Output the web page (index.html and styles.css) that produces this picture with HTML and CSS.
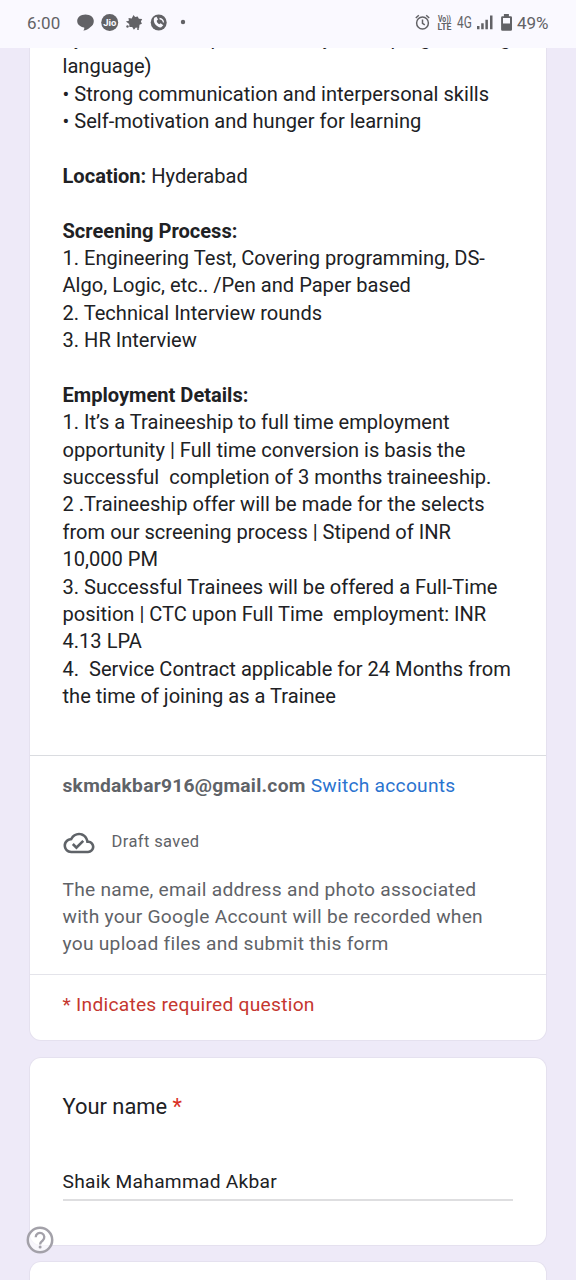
FILE: index.html
```html
<!DOCTYPE html>
<html lang="en">
<head>
<meta charset="utf-8">
<title>Form</title>
<link rel="stylesheet" href="styles.css">
</head>
<body>
<header class="status">
  <span class="clock">6:00</span>
  <svg class="notif" width="112" height="20" viewBox="0 0 112 20" fill="#626266">
    <path d="M8.500 1.500C3.800 1.500.2 4.300.2 8c0 3.500 3 6 7 6.400.3 1.300-.2 2.400-1 3.200 3-.3 5.300-1.400 7-3.400 2.300-1.200 3.600-3.500 3.600-6.200 0-3.700-3.600-6.500-8.300-6.500z"/>
    <circle cx="32.700" cy="9.500" r="8.500"/>
    <text x="32.800" y="13" class="jio" text-anchor="middle">Jio</text>
    <path d="M56.500 2l1.600 2 2.600-.6 1.200 2.400 3.300.3-1.300 2.500 1 2.200-2.400 1-.4 3.500-3.200-.8-2 2.200-1.700-2.800-2.800.2-.2-3-3.300-2.500 3-.9-.4-2.600 3.200.3z"/>
    <circle cx="50.500" cy="13.500" r="1.200"/><circle cx="61" cy="16" r="1"/>
    <circle cx="81.700" cy="9.500" r="8"/>
    <path d="M77.300 4.700c-1.800 4 1.500 9.300 6.700 9.800l2.300-2.200-2.600-2-1.500 1c-1.500-.7-2.400-2-2.500-3.500l1.300-1.200-1.500-2.800z" fill="#faf9ff"/>
    <path d="M82.500 5.500q3.500.5 4 4" fill="none" stroke="#faf9ff" stroke-width="1.300"/>
    <circle cx="106" cy="9" r="2.200"/>
  </svg>
  <span class="spacer"></span>
  <svg class="system" width="98" height="22" viewBox="0 0 98 22" fill="#626266">
    <g fill="none" stroke="#626266" stroke-width="1.500">
      <circle cx="8.500" cy="11" r="5.900"/>
      <path d="M8.500 7.500v3.800l2.300 1.500M1.800 6l3-2.700M15.200 6l-3-2.700"/>
    </g>
    <text x="24" y="9.500" class="volte" textLength="13" lengthAdjust="spacingAndGlyphs">Vo))</text>
    <text x="23.500" y="17.500" class="volte" textLength="14" lengthAdjust="spacingAndGlyphs">LTE</text>
    <text x="43" y="16" class="net" textLength="14.800" lengthAdjust="spacingAndGlyphs">4G</text>
    <path d="M63 14h2.500v3.200H63zM67.200 11.300h2.500v5.900h-2.500zM71.400 7.700h2.500v9.500h-2.500zM76 3.500h2.500v13.700H76z"/>
    <path fill-rule="evenodd" d="M89.900 2h5v2.200h1.800q1.300 0 1.300 1.300v12q0 1.300-1.300 1.300h-8.300q-1.300 0-1.300-1.300v-12q0-1.300 1.300-1.300h1.500zM89 6v5.500h7V6z"/>
  </svg>
  <span class="battery">49%</span>
</header>

<main class="page">
  <section class="card intro">
    <div class="description">
      <div class="clipped"><span class="w1">by use of</span><span class="w2">prior</span><span class="w3">any</span><span>programming</span></div>
      <div>language)</div>
      <div>• Strong communication and interpersonal skills</div>
      <div>• Self-motivation and hunger for learning</div>
      <br>
      <div><b>Location:</b> Hyderabad</div>
      <br>
      <div><b>Screening Process:</b></div>
      <div>1. Engineering Test, Covering programming, DS-</div>
      <div>Algo, Logic, etc.. /Pen and Paper based</div>
      <div>2. Technical Interview rounds</div>
      <div>3. HR Interview</div>
      <br>
      <div><b>Employment Details:</b></div>
      <div>1. It’s a Traineeship to full time employment</div>
      <div>opportunity | Full time conversion is basis the</div>
      <div>successful&nbsp; completion of 3 months traineeship.</div>
      <div>2 .Traineeship offer will be made for the selects</div>
      <div>from our screening process | Stipend of INR</div>
      <div>10,000 PM</div>
      <div>3. Successful Trainees will be offered a Full-Time</div>
      <div>position | CTC upon Full Time&nbsp; employment: INR</div>
      <div>4.13 LPA</div>
      <div>4.&nbsp; Service Contract applicable for 24 Months from</div>
      <div>the time of joining as a Trainee</div>
    </div>
    <div class="account">
      <div class="who"><b>skmdakbar916@gmail.com</b> <a class="switch">Switch accounts</a></div>
      <div class="draft">
        <svg width="32" height="32" viewBox="-.4 -.4 24.800 24.800" fill="#5f6368"><path d="M19.350 10.040C18.670 6.590 15.640 4 12 4 9.110 4 6.600 5.640 5.350 8.040 2.340 8.360 0 10.910 0 14c0 3.310 2.690 6 6 6h13c2.760 0 5-2.240 5-5 0-2.640-2.050-4.780-4.650-4.960zM19 18H6c-2.210 0-4-1.790-4-4 0-2.050 1.530-3.760 3.560-3.970l1.070-.11.5-.95C8.080 7.140 9.940 6 12 6c2.620 0 4.880 1.860 5.390 4.430l.3 1.500 1.530.11c1.560.1 2.780 1.410 2.780 2.960 0 1.650-1.350 3-3 3zm-9-3.820l-2.090-2.090L6.500 13.500 10 17l6.010-6.010-1.410-1.410z"/></svg>
        <span>Draft saved</span>
      </div>
      <p class="notice">The name, email address and photo associated<br>with your Google Account will be recorded when<br>you upload files and submit this form</p>
    </div>
    <div class="required">* Indicates required question</div>
  </section>

  <section class="card question">
    <div class="label">Your name <span class="star">*</span></div>
    <div class="answer">Shaik Mahammad Akbar</div>
  </section>

  <section class="card next"></section>
</main>

<svg class="help" width="28" height="28" viewBox="0 0 28 28">
  <circle cx="14" cy="14" r="12.200" fill="#fff" fill-opacity=".6" stroke="#a3a1a9" stroke-width="2.500"/>
  <path d="M9.700 11.200a4.300 4.300 0 1 1 7 3.300c-1.700 1.300-2.600 2-2.600 4" fill="none" stroke="#a3a1a9" stroke-width="2.300"/>
  <circle cx="14.100" cy="21" r="1.500" fill="#a3a1a9"/>
</svg>
</body>
</html>
```
FILE: styles.css
```css
* { box-sizing: border-box; }
body {
  margin: 0;
  width: 576px;
  height: 1280px;
  overflow: hidden;
  display: flex;
  flex-direction: column;
  background: #eeeaf8;
  color: #202124;
  font-family: Roboto, "Liberation Sans", sans-serif;
  white-space: nowrap;
}
.status {
  flex: none;
  height: 48px;
  padding: 0 27px 3px 27px;
  display: flex;
  align-items: center;
  background: #faf9ff;
  color: #626266;
}
.clock { width: 50px; font-size: 17px; letter-spacing: 0.2px; }
.spacer { flex: 1; }
.battery { width: 32px; margin-left: 5px; font-size: 17px; }
.jio { fill: #faf9ff; font-size: 9.5px; font-weight: 700; }
.volte { font-size: 9px; font-weight: 700; }
.net { font-size: 16px; }
.page {
  flex: 1;
  min-height: 0;
  overflow: hidden;
  padding: 0 30px;
  display: flex;
  flex-direction: column;
  gap: 18px;
}
.card {
  flex: none;
  background: #fff;
  border-radius: 11px;
  box-shadow: 0 0 0 1px #e5e1ef;
}
.intro { height: 992px; border-radius: 0 0 11px 11px; }
.description {
  display: flow-root;
  height: 707px;
  padding: 0 32.5px;
  font-size: 20.08px;
  line-height: 27.37px;
}
.clipped { margin-top: -23.4px; padding-bottom: 1.5px; display: flex; }
.clipped .w1 { width: 148px; }
.clipped .w2 { width: 90px; }
.clipped .w3 { width: 90px; }
.account {
  height: 220px;
  border-top: 1px solid #dadce0;
  border-bottom: 1px solid #e4e4ea;
  padding: 16px 32.5px 0;
  color: #5f6368;
  font-size: 19.2px;
  line-height: 27.4px;
  letter-spacing: 0.26px;
}
.switch { color: #2a73cf; }
.draft {
  height: 32px;
  margin-top: 28px;
  display: flex;
  align-items: center;
  gap: 17px;
  font-size: 16.5px;
  letter-spacing: 0.4px;
}
.draft span { margin-top: -3px; }
.notice { margin: 16.2px 0 0; }
.required {
  padding: 16px 32.5px;
  color: #c5372f;
  font-size: 19.2px;
  line-height: 27.4px;
  letter-spacing: 0.26px;
}
.question { height: 187px; padding: 32px 33px 0 32.5px; }
.label { font-size: 21.9px; line-height: 33px; }
.star { color: #d93025; }
.answer {
  height: 34px;
  margin-top: 43.5px;
  border-bottom: 2px solid #dedee0;
  font-size: 19.2px;
  line-height: 29.6px;
  letter-spacing: 0.26px;
}
.next { height: 60px; margin-top: -1px; }
.help { position: absolute; left: 26px; top: 1226px; }
```
